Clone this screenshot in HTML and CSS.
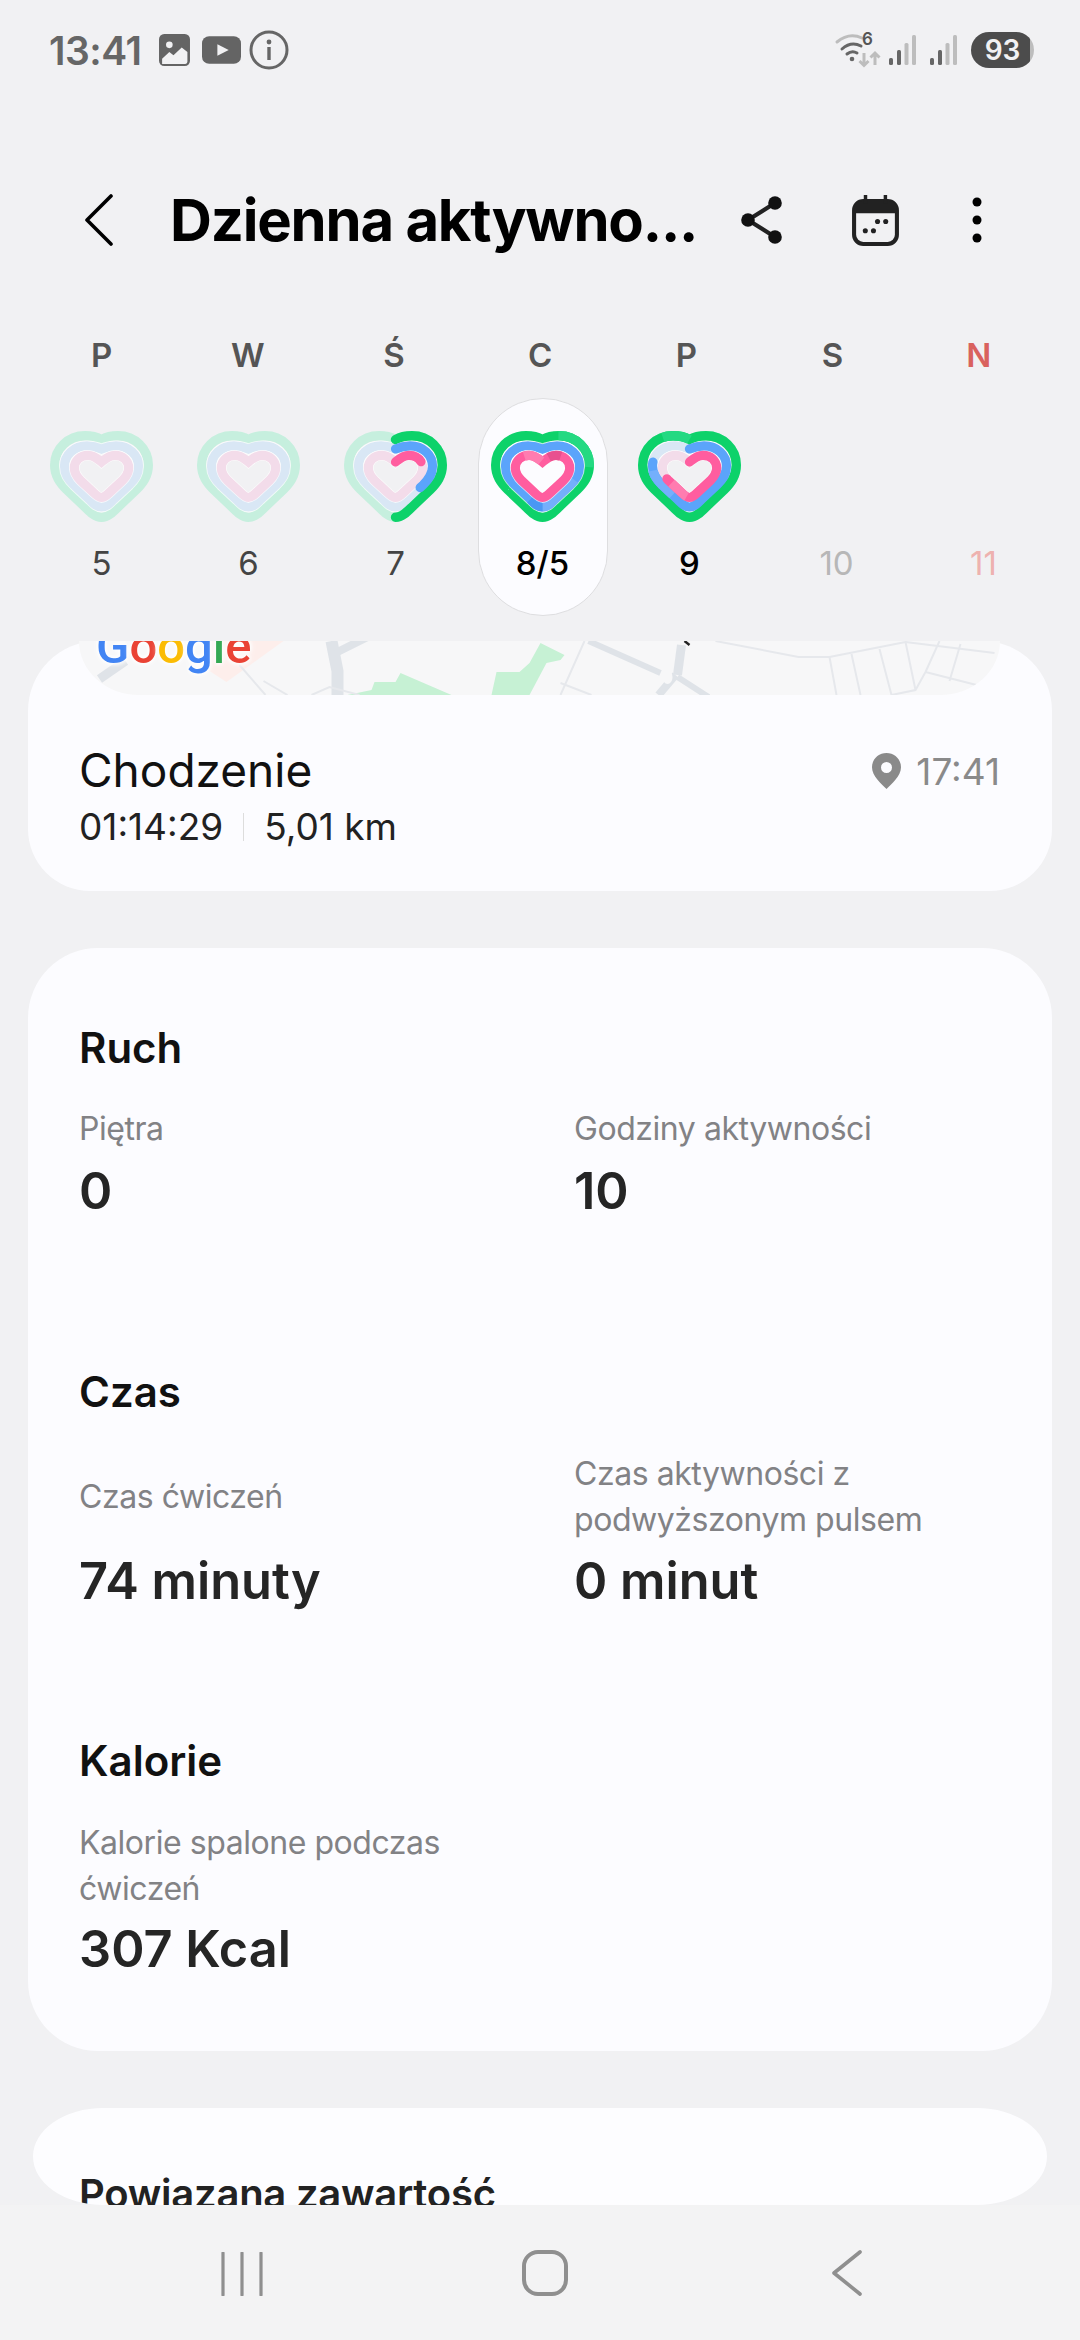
FILE: index.html
```html
<!DOCTYPE html>
<html lang="pl">
<head>
<meta charset="utf-8">
<title>Dzienna aktywność</title>
<link rel="stylesheet" href="styles.css">
</head>
<body>
<svg class="defs" width="0" height="0" aria-hidden="true">
  <defs>
    <path id="ring-g" pathLength="100" d="M51.5 8.5C56 6 62 4.7 68 4.7C85 4.7 98.3 18 98.3 34C98.3 45 93 52 86 59L68 76C63 81 58 86.3 51.5 86.3C45 86.3 40 81 35 76L17 59C10 52 4.7 45 4.7 34C4.7 18 18 4.7 35 4.7C41 4.7 47 6 51.5 8.5Z"/>
    <path id="ring-b" pathLength="100" d="M51.5 18C56 16 61 14.8 66 14.8C79 14.8 88.5 24 88.5 35C88.5 43 85 48 79 54L63 69C59 73 56 76 51.5 76C47 76 44 73 40 69L24 54C18 48 14.5 43 14.5 35C14.5 24 24 14.8 37 14.8C42 14.8 47 16 51.5 18Z"/>
    <path id="ring-p" pathLength="100" d="M51.5 31C55 28 59 24.3 65 24.3C73 24.3 78.7 30 78.7 37C78.7 42 76 46 72 50L59 62C56 64.8 54 66.5 51.5 66.5C49 66.5 47 64.8 44 62L31 50C27 46 24.3 42 24.3 37C24.3 30 30 24.3 38 24.3C44 24.3 48 28 51.5 31Z"/>
    <g id="heart-pale">
      <use href="#ring-g" class="pale-g"/>
      <use href="#ring-b" class="hair-b"/>
      <use href="#ring-b" class="pale-b"/>
      <use href="#ring-p" class="hair-p"/>
      <use href="#ring-p" class="pale-p"/>
    </g>
  </defs>
</svg>

<header class="status">
  <div class="status-left">
    <span class="time">13:41</span>
    <svg class="ic-img" viewBox="0 0 30 31"><rect width="30" height="31" rx="5" fill="#646464"/><circle cx="10" cy="10.500" r="3.200" fill="#f1f1f3"/><path d="M3 29V24L10 17.500L14 20.500L22 13L27.500 17.500V27Q27.500 29 25.500 29Z" fill="#f1f1f3"/></svg>
    <svg class="ic-yt" viewBox="0 0 38 27"><rect width="38" height="27" rx="7" fill="#646464"/><path d="M15 8L26 13.500L15 19Z" fill="#f1f1f3"/></svg>
    <svg class="ic-info" viewBox="0 0 40 40"><circle cx="20" cy="20" r="18" fill="none" stroke="#666" stroke-width="3"/><circle cx="20" cy="12" r="2.400" fill="#666"/><rect x="18.300" y="17" width="3.400" height="13" fill="#666"/></svg>
  </div>
  <div class="status-right">
    <span class="wifi">
      <svg viewBox="0 0 44 34" width="44" height="34"><path d="M2 9Q14 -1 27 5" fill="none" stroke="#bdbdbd" stroke-width="3" stroke-linecap="round"/><path d="M7 16Q16 8 26 13" fill="none" stroke="#666" stroke-width="3" stroke-linecap="round"/><path d="M12 21Q17 17 22 20" fill="none" stroke="#666" stroke-width="3" stroke-linecap="round"/><circle cx="17" cy="26" r="2.300" fill="#666"/><path d="M29 20V32M24.500 28L29 32.500L33.500 28" fill="none" stroke="#bdbdbd" stroke-width="3"/><path d="M40 32V20M35.500 24.500L40 20L44.500 24.500" fill="none" stroke="#bdbdbd" stroke-width="3"/></svg>
      <span class="wifi-six">6</span>
    </span>
    <svg class="ic-sig" viewBox="0 0 27 30"><rect x="0" y="23" width="4" height="7" rx="1.500" fill="#666"/><rect x="8" y="15" width="4" height="15" rx="1.500" fill="#666"/><rect x="15.500" y="8" width="4" height="22" rx="1.500" fill="#bdbdbd"/><rect x="23" y="0" width="4" height="30" rx="1.500" fill="#bdbdbd"/></svg>
    <svg class="ic-sig ic-sig-second" viewBox="0 0 27 30"><rect x="0" y="23" width="4" height="7" rx="1.500" fill="#666"/><rect x="8" y="15" width="4" height="15" rx="1.500" fill="#666"/><rect x="15.500" y="8" width="4" height="22" rx="1.500" fill="#bdbdbd"/><rect x="23" y="0" width="4" height="30" rx="1.500" fill="#bdbdbd"/></svg>
    <span class="battery">93</span>
  </div>
</header>

<nav class="toolbar">
  <svg class="ic-back" viewBox="0 0 28 52"><path d="M26 2L2 26L26 50" fill="none" stroke="#000" stroke-width="3.600" stroke-linecap="round" stroke-linejoin="round"/></svg>
  <h1 class="title">Dzienna aktywno...</h1>
  <svg class="ic-share" viewBox="0 0 42 48"><path d="M34 7L7 24L34 41" fill="none" stroke="#222" stroke-width="4.200"/><circle cx="34" cy="7" r="6.800" fill="#111"/><circle cx="7" cy="24" r="6.800" fill="#111"/><circle cx="34" cy="41" r="6.800" fill="#111"/></svg>
  <svg class="ic-cal" viewBox="0 0 46 50"><rect x="2" y="6" width="42" height="42" rx="9" fill="none" stroke="#222" stroke-width="4"/><path d="M2 18V15Q2 6 11 6H35Q44 6 44 15V18Z" fill="#222"/><rect x="11.500" y="0" width="3.400" height="8" fill="#222"/><rect x="31" y="0" width="3.400" height="8" fill="#222"/><circle cx="25" cy="26" r="2.500" fill="#222"/><circle cx="33" cy="26" r="2.500" fill="#222"/><circle cx="13" cy="35" r="2.500" fill="#222"/><circle cx="21" cy="35" r="2.500" fill="#222"/></svg>
  <svg class="ic-more" viewBox="0 0 10 46"><circle cx="5" cy="5" r="4.500"/><circle cx="5" cy="23" r="4.500"/><circle cx="5" cy="41" r="4.500"/></svg>
</nav>

<section class="week">
  <div class="letters">
    <span>P</span><span>W</span><span>Ś</span><span>C</span><span>P</span><span>S</span><span class="sunday">N</span>
  </div>
  <div class="days">
    <div class="day">
      <svg class="heart" viewBox="0 0 103 91"><use href="#heart-pale"/></svg>
      <span class="num">5</span>
    </div>
    <div class="day">
      <svg class="heart" viewBox="0 0 103 91"><use href="#heart-pale"/></svg>
      <span class="num">6</span>
    </div>
    <div class="day">
      <svg class="heart" viewBox="0 0 103 91">
        <use href="#heart-pale"/>
        <use href="#ring-g" class="full-g d7-g"/>
        <use href="#ring-b" class="full-b d7-b"/>
        <use href="#ring-p" class="full-p d7-p"/>
      </svg>
      <span class="num">7</span>
    </div>
    <div class="day day-selected">
      <svg class="heart" viewBox="0 0 103 91">
        <use href="#ring-g" class="full-g"/>
        <use href="#ring-g" class="seg-g-light d8-g-light"/>
        <use href="#ring-b" class="hair-b"/>
        <use href="#ring-b" class="full-b"/>
        <use href="#ring-b" class="seg-b-light d8-b-light"/>
        <use href="#ring-b" class="seg-b-dark d8-b-dark"/>
        <use href="#ring-p" class="hair-p"/>
        <use href="#ring-p" class="full-p"/>
        <use href="#ring-p" class="seg-p-dark d8-p-dark"/>
        <use href="#ring-p" class="seg-p-light d8-p-light"/>
      </svg>
      <span class="num num-strong">8/5</span>
    </div>
    <div class="day">
      <svg class="heart" viewBox="0 0 103 91">
        <use href="#heart-pale"/>
        <use href="#ring-g" class="full-g"/>
        <use href="#ring-g" class="seg-g-light d9-g-light"/>
        <use href="#ring-b" class="full-b d9-b"/>
        <use href="#ring-b" class="seg-b-light d9-b-light"/>
        <use href="#ring-p" class="full-p d9-p"/>
        <use href="#ring-p" class="seg-p-light d9-p-light"/>
      </svg>
      <span class="num num-strong">9</span>
    </div>
    <div class="day"><span class="heart-empty"></span><span class="num num-off">10</span></div>
    <div class="day"><span class="heart-empty"></span><span class="num num-off-red">11</span></div>
  </div>
</section>

<main class="scroll">
  <article class="card card-walk">
    <div class="map">
      <svg class="map-art" viewBox="0 0 920 54">
        <path d="M130 0H204L147 41L130 30Z" fill="#fdeeeb"/>
        <path d="M268 54L292 49L295 41L316 41L321 32L372 54Z" fill="#c6f1d4"/>
        <path d="M412 54L417 31L440 31L450 22L461 2L485 14L481 19L467 22L450 54Z" fill="#c6f1d4"/>
        <g fill="none" stroke="#dfe3e8" stroke-width="12">
          <path d="M252 0L258 30L258 54"/>
          <path d="M256 12L288 -4" stroke-width="8"/>
          <path d="M20 38L46 20" stroke-width="9"/>
          <path d="M509 0L581 32" stroke-width="6"/>
          <path d="M602 4L598 34" stroke-width="9"/>
          <path d="M596 34L579 54" stroke-width="8"/>
          <path d="M598 36L629 56" stroke-width="6"/>
        </g>
        <ellipse cx="588" cy="36" rx="5" ry="7" fill="#f7f7f8"/>
        <path d="M605 0L610 4" stroke="#222" stroke-width="2.500"/>
        <g fill="none" stroke="#e6e8ec" stroke-width="2">
          <path d="M505 0L481 54M481 42L512 54"/>
          <path d="M636 0L719 16L750 16L826 1L915 12"/>
          <path d="M750 16L757 54M772 13L781 54M800 8L812 54M826 1L836 49M860 0L846 31M881 3L870 40M846 31L901 45M812 54L836 49L846 31"/>
          <path d="M184 40L208 54M160 24L186 54M232 54L250 46L280 54"/>
        </g>
      </svg>
      <span class="google"><span class="g-blue">G</span><span class="g-red">o</span><span class="g-yellow">o</span><span class="g-blue">g</span><span class="g-green">l</span><span class="g-red">e</span></span>
    </div>
    <div class="walk-row">
      <div class="walk-main">
        <div class="walk-title">Chodzenie</div>
        <div class="walk-sub"><span>01:14:29</span><i class="sep"></i><span>5,01 km</span></div>
      </div>
      <div class="walk-time">
        <svg class="ic-pin" viewBox="0 0 29 36"><path fill-rule="evenodd" d="M14.500 0C6.500 0 0 6.300 0 14.200C0 23 9.500 31 14.500 36C19.500 31 29 23 29 14.200C29 6.300 22.500 0 14.500 0ZM14.500 9A5.500 5.500 0 1 1 14.500 20A5.500 5.500 0 1 1 14.500 9Z" fill="#8a8a8a"/></svg>
        <span>17:41</span>
      </div>
    </div>
  </article>

  <article class="card card-stats">
    <section>
      <h2 class="sec-title">Ruch</h2>
      <div class="stats stats-ruch">
        <div><div class="label">Piętra</div><div class="value">0</div></div>
        <div><div class="label">Godziny aktywności</div><div class="value">10</div></div>
      </div>
    </section>
    <section class="sec-czas">
      <h2 class="sec-title">Czas</h2>
      <div class="stats">
        <div><div class="label label-tall">Czas ćwiczeń</div><div class="value value-after-tall">74 minuty</div></div>
        <div><div class="label label-tall">Czas aktywności z podwyższonym pulsem</div><div class="value value-after-tall">0 minut</div></div>
      </div>
    </section>
    <section class="sec-kcal">
      <h2 class="sec-title">Kalorie</h2>
      <div class="stats">
        <div><div class="label label-tall">Kalorie spalone podczas ćwiczeń</div><div class="value value-after-tall">307 Kcal</div></div>
      </div>
    </section>
  </article>

  <article class="card-related">
    <h2 class="sec-title related-title">Powiązana zawartość</h2>
  </article>
</main>

<footer class="navbar">
  <div class="nav-cell">
    <svg class="nav-recent" viewBox="0 0 42 44"><path d="M2 1V43M21 1V43M40 1V43" stroke="#8f8f8f" stroke-width="3.200" stroke-linecap="round" fill="none"/></svg>
  </div>
  <div class="nav-cell">
    <svg class="nav-home" viewBox="0 0 46 46"><rect x="2" y="2" width="42" height="42" rx="14" fill="none" stroke="#8f8f8f" stroke-width="4"/></svg>
  </div>
  <div class="nav-cell">
    <svg class="nav-back" viewBox="0 0 30 46"><path d="M28 2L2 23L28 44" fill="none" stroke="#8f8f8f" stroke-width="3.600" stroke-linecap="round" stroke-linejoin="round"/></svg>
  </div>
</footer>
</body>
</html>
```
FILE: styles.css
```css
* { box-sizing: border-box; }

html, body { margin: 0; padding: 0; }

body {
  width: 1080px;
  height: 2340px;
  overflow: hidden;
  display: flex;
  flex-direction: column;
  background: #f1f1f3;
  font-family: Inter, "Noto Sans", sans-serif;
  color: #000;
}

.defs { position: absolute; }

/* status bar */
.status {
  height: 100px;
  flex: none;
  display: flex;
  align-items: center;
  justify-content: space-between;
  padding: 0 46px 0 49px;
}

.status-left, .status-right { display: flex; align-items: center; }

.time {
  font-size: 39px;
  font-weight: 600;
  color: #666;
  letter-spacing: -0.5px;
  margin-right: 18px;
}

.ic-img { width: 31px; height: 32px; margin-right: 12px; }
.ic-yt { width: 39px; height: 28px; margin-right: 8px; }
.ic-info { width: 40px; height: 40px; }

.wifi { position: relative; width: 44px; height: 34px; margin-right: 10px; }
.wifi svg { display: block; overflow: visible; }
.wifi-six {
  position: absolute;
  left: 27px;
  top: -4px;
  font-size: 17px;
  font-weight: 600;
  color: #555;
}

.ic-sig { width: 27px; height: 30px; }
.ic-sig-second { margin-left: 14px; }

.battery {
  width: 63px;
  height: 36px;
  margin-left: 14px;
  border-radius: 18px;
  background: linear-gradient(90deg, #4c4c4c 93%, #bdbdbd 93%);
  color: #f1f1f3;
  font-size: 28px;
  font-weight: 600;
  line-height: 36px;
  text-align: center;
}

/* toolbar */
.toolbar {
  height: 100px;
  margin-top: 70px;
  flex: none;
  display: flex;
  align-items: center;
  padding-left: 85px;
}

.ic-back { width: 28px; height: 52px; margin-right: 57px; flex: none; }

.title {
  margin: 0;
  width: 530px;
  flex: none;
  font-size: 58px;
  font-weight: 700;
  white-space: nowrap;
  letter-spacing: -1.2px;
}

.ic-share { width: 42px; height: 48px; margin-left: 41px; flex: none; }
.ic-cal { width: 47px; height: 51px; margin-left: 69px; flex: none; }
.ic-more { width: 10px; height: 46px; margin-left: 73px; flex: none; }

/* week */
.week { flex: none; margin-top: 60px; }

.letters {
  display: grid;
  grid-template-columns: repeat(7, 146.2px);
  padding-left: 28.500px;
  height: 50px;
  line-height: 50px;
  text-align: center;
  font-size: 33px;
  font-weight: 600;
  color: #555;
}

.sunday { color: #d9625e; }

.days {
  display: grid;
  grid-template-columns: repeat(7, 147px);
  padding-left: 28px;
  margin-top: 18px;
  height: 218px;
}

.day {
  display: flex;
  flex-direction: column;
  align-items: center;
  padding-top: 33px;
  height: 218px;
}

.day-selected {
  width: 130px;
  justify-self: center;
  background: #fcfcff;
  border: 1px solid #dedee0;
  border-radius: 65px;
  padding-top: 32px;
}

.heart { width: 103px; height: 91px; display: block; flex: none; }
.heart-empty { width: 103px; height: 91px; display: block; flex: none; }

.pale-g, .pale-b, .pale-p, .full-g, .full-b, .full-p, .hair-b, .hair-p { fill: none; stroke-linecap: round; }

.pale-g { stroke: #c6efde; stroke-width: 9.400; }
.pale-b { stroke: #d9e7f5; stroke-width: 9.200; }
.pale-p { stroke: #f3dcea; stroke-width: 9.200; }
.hair-b { stroke: #fff; stroke-width: 10.800; opacity: .75; }
.hair-p { stroke: #fff; stroke-width: 10.600; opacity: .75; }

.full-g { stroke: #0dd26a; stroke-width: 9.400; }
.full-b { stroke: #5ba4fb; stroke-width: 9.200; }
.full-p { stroke: #ff5d9f; stroke-width: 9.200; }

.seg-g-light, .seg-b-light, .seg-b-dark, .seg-p-light, .seg-p-dark { fill: none; }
.seg-g-light { stroke: #24d982; stroke-width: 9.400; }
.seg-b-light { stroke: #74affc; stroke-width: 9.200; }
.seg-b-dark { stroke: #4a97f4; stroke-width: 9.200; }
.seg-p-light { stroke: #ff7cb0; stroke-width: 9.200; }
.seg-p-dark { stroke: #e8508f; stroke-width: 9.200; }

.d7-g { stroke-dasharray: 50 100; }
.d7-b { stroke-dasharray: 35 100; }
.d7-p { stroke-dasharray: 19 100; }
.d9-b { stroke-dasharray: 79 100; }
.d9-p { stroke-dasharray: 69 100; }

.d8-g-light { stroke-dasharray: 18 100; stroke-dashoffset: -6; }
.d8-b-light { stroke-dasharray: 20 100; stroke-dashoffset: -30; }
.d8-b-dark { stroke-dasharray: 7 100; stroke-dashoffset: -50; }
.d8-p-dark { stroke-dasharray: 8 100; stroke-dashoffset: -5; }
.d8-p-light { stroke-dasharray: 12 100; stroke-dashoffset: -87; }
.d9-g-light { stroke-dasharray: 10 100; stroke-dashoffset: -90; }
.d9-b-light { stroke-dasharray: 15 100; stroke-dashoffset: -60; }
.d9-p-light { stroke-dasharray: 13 100; stroke-dashoffset: -52; }

.num {
  margin-top: 20px;
  height: 42px;
  line-height: 42px;
  font-size: 33px;
  color: #444;
}

.num-strong { color: #000; font-weight: 500; }
.num-off { color: #b7b7b7; }
.num-off-red { color: #eeb2af; }

/* scrolling content */
.scroll {
  flex: none;
  height: 1564px;
  margin-top: 25px;
  padding: 0 28px;
  overflow: hidden;
}

.card {
  background: #fcfcff;
  border-radius: 70px;
  padding: 0 52px 0 51px;
}

.card-walk {
  height: 250px;
  margin-bottom: 57px;
  border-radius: 70px 70px 62px 62px;
}

.map {
  position: relative;
  height: 54px;
  overflow: hidden;
  background: #f7f7f8;
  border-radius: 0 0 60px 60px / 0 0 54px 54px;
}

.map-art { display: block; width: 921px; height: 54px; }

.google {
  position: absolute;
  left: 17px;
  top: -18px;
  font-family: Roboto, sans-serif;
  font-size: 49px;
  line-height: 48px;
  font-weight: 500;
  text-shadow: 0 0 5px #fff, 0 0 5px #fff, 0 0 8px #fff;
}

.g-blue { color: #4285f4; }
.g-red { color: #ea4335; }
.g-yellow { color: #fbbc05; }
.g-green { color: #34a853; }

.walk-row {
  display: flex;
  justify-content: space-between;
  align-items: flex-start;
  margin-top: 47px;
}

.walk-title { font-size: 46px; line-height: 56px; color: #111; }

.walk-sub {
  display: flex;
  align-items: center;
  margin-top: 7px;
  font-size: 37px;
  line-height: 44px;
  color: #222;
}

.sep { width: 1px; height: 28px; margin: 0 20px; background: #ddd; }

.walk-time {
  display: flex;
  align-items: center;
  height: 58px;
  font-size: 37px;
  color: #8a8a8a;
}

.ic-pin { width: 29px; height: 36px; margin-right: 15px; }

.card-stats {
  height: 1103px;
  padding-top: 74px;
  margin-bottom: 57px;
}

.sec-title {
  margin: 0;
  font-size: 42px;
  line-height: 52px;
  font-weight: 600;
  color: #111;
}

.stats {
  display: grid;
  grid-template-columns: 445px 426px;
  column-gap: 50px;
  margin-top: 33px;
}

.stats-ruch { margin-top: 32px; }

.sec-czas { margin-top: 145px; }
.sec-kcal { margin-top: 124px; }

.label {
  font-size: 32px;
  letter-spacing: -0.45px;
  line-height: 46px;
  color: #828285;
}

.label-tall { height: 92px; display: flex; align-items: center; }

.value {
  margin-top: 9px;
  font-size: 50.500px;
  line-height: 60px;
  font-weight: 600;
  color: #252525;
}

.value-after-tall { margin-top: 7.500px; }

.card-related {
  height: 97px;
  margin: 0 5px;
  padding: 60px 46px 0;
  overflow: hidden;
  background: #fdfdff;
  border-radius: 70px / 48.500px;
}

.related-title { white-space: nowrap; color: #222; font-size: 40px; letter-spacing: -0.25px; }

/* navigation bar */
.navbar {
  flex: 1;
  display: grid;
  grid-template-columns: repeat(3, 302.500px);
  padding: 45px 0 0 91px;
  background: #f3f3f4;
}

.nav-cell { display: flex; justify-content: center; align-items: flex-start; }

.nav-recent { width: 42px; height: 44px; margin-top: 2px; }
.nav-home { width: 46px; height: 46px; }
.nav-back { width: 30px; height: 46px; }
```
